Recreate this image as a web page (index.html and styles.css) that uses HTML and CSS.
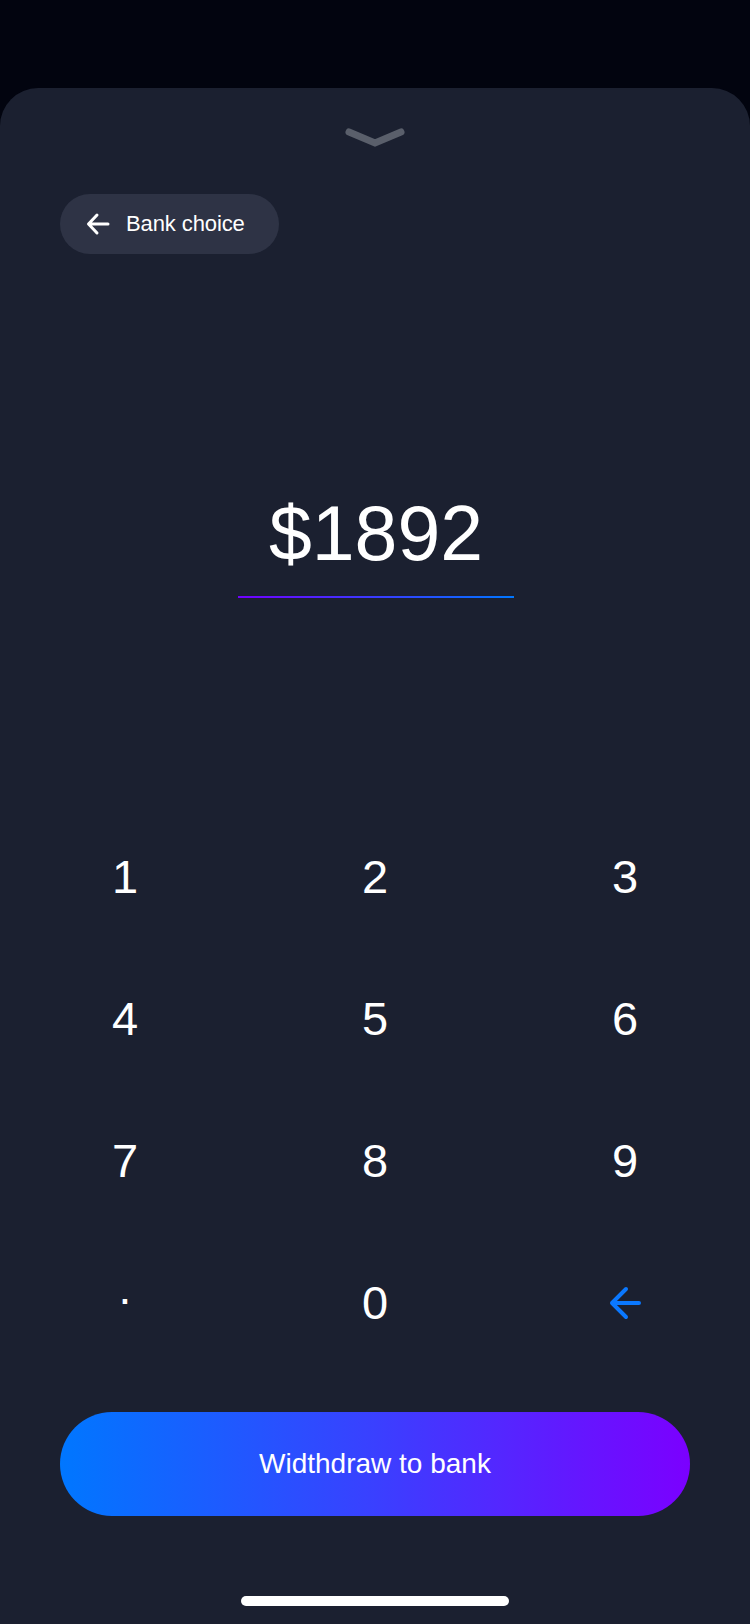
FILE: index.html
```html
<!DOCTYPE html>
<html lang="en">
<head>
<meta charset="utf-8">
<title>Withdraw</title>
<link rel="stylesheet" href="styles.css">
</head>
<body>
<div class="screen">
  <div class="sheet">
    <div class="grabber">
      <svg width="60" height="20" viewBox="0 0 60 20"><polyline points="4,4 30,15 56,4" fill="none" stroke="#5a5f6b" stroke-width="7" stroke-linecap="round" stroke-linejoin="miter"/></svg>
    </div>
    <div class="back-row">
      <button class="back">
        <svg width="24" height="24" viewBox="0 0 24 24"><path d="M22 12H3M11 3L2.5 12L11 21" fill="none" stroke="#fff" stroke-width="3" stroke-linecap="round" stroke-linejoin="round"/></svg>
        <span>Bank choice</span>
      </button>
    </div>
    <div class="amount">$1892</div>
    <div class="underline"></div>
    <div class="keypad">
      <div class="key">1</div>
      <div class="key">2</div>
      <div class="key">3</div>
      <div class="key">4</div>
      <div class="key">5</div>
      <div class="key">6</div>
      <div class="key">7</div>
      <div class="key">8</div>
      <div class="key">9</div>
      <div class="key"><span class="dot">.</span></div>
      <div class="key">0</div>
      <div class="key">
        <svg width="36" height="36" viewBox="0 0 36 36"><path d="M32 18H5M19 4L5 18L19 32" fill="none" stroke="#0a78ff" stroke-width="4" stroke-linecap="round" stroke-linejoin="round"/></svg>
      </div>
    </div>
    <div class="cta-row">
      <button class="cta">Widthdraw to bank</button>
    </div>
    <div class="home"></div>
  </div>
</div>
</body>
</html>
```

FILE: styles.css
```css
* { box-sizing: border-box; }
html, body {
  margin: 0;
  padding: 0;
  background: #02040f;
}
body {
  width: 750px;
  height: 1624px;
  overflow: hidden;
  font-family: "Liberation Sans", Arial, sans-serif;
  color: #fff;
}
.screen {
  padding-top: 88px;
  height: 1624px;
}
.sheet {
  height: 1536px;
  background: #1b2030;
  border-radius: 38px 38px 0 0;
  display: flex;
  flex-direction: column;
}
.grabber {
  margin-top: 40px;
  height: 20px;
  display: flex;
  justify-content: center;
}
.grabber svg { display: block; }
.back-row {
  margin-top: 46px;
  padding-left: 60px;
  display: flex;
}
.back {
  height: 60px;
  border: none;
  border-radius: 30px;
  background: #2e3345;
  color: #fff;
  display: flex;
  align-items: center;
  gap: 16px;
  padding: 0 34px 0 26px;
  font-family: "Liberation Sans", Arial, sans-serif;
  font-size: 22px;
  letter-spacing: -0.1px;
}
.back svg { display: block; }
.amount {
  margin-top: 241px;
  font-size: 77px;
  line-height: 77px;
  height: 77px;
  text-align: center;
  padding-left: 2px;
}
.underline {
  margin: 24px auto 0;
  width: 276px;
  height: 2px;
  transform: translateX(1px);
  background: linear-gradient(90deg, #7200ff, #0077ff);
}
.keypad {
  margin-top: 208px;
  display: grid;
  grid-template-columns: repeat(3, 250px);
  grid-auto-rows: 142px;
}
.key {
  display: flex;
  align-items: center;
  justify-content: center;
  font-size: 47px;
  line-height: 142px;
}
.key svg { display: block; }
.dot {
  display: block;
  transform: translateY(-15px);
  font-size: 46px;
}
.cta-row {
  margin-top: 38px;
  padding: 0 60px;
}
.cta {
  width: 100%;
  height: 104px;
  border: none;
  border-radius: 52px;
  background: linear-gradient(90deg, #0077ff 0%, #3a40ff 50%, #7b00ff 100%);
  color: #fff;
  font-family: "Liberation Sans", Arial, sans-serif;
  font-size: 28px;
}
.home {
  margin: 80px auto 0;
  width: 268px;
  height: 10px;
  border-radius: 5px;
  background: #fff;
}
```
